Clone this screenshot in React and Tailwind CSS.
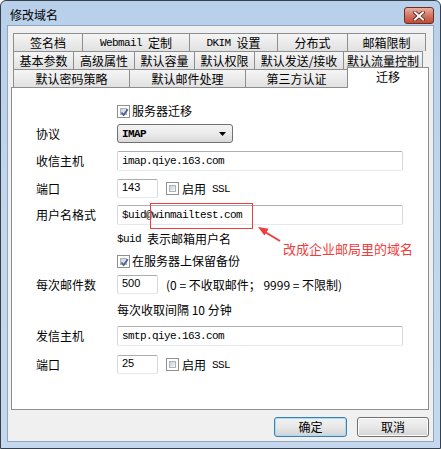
import React from "react";

const cjk = "font-['Noto_Sans_CJK_SC','Noto_Sans',sans-serif]";
const mono = "font-['Liberation_Mono',monospace]";

function Check({ checked }) {
  return (
    <span className="w-[13px] h-[13px] shrink-0 border border-[#8e8f8f] bg-white p-[2px] flex">
      <span className="relative w-full h-full border border-[#aeb3b9] bg-linear-to-br from-[#cbcfd5] to-[#f6f6f6]">
        {checked && (
          <svg className="absolute left-[-1px] top-[-1px]" width="9" height="9" viewBox="0 0 9 9">
            <path d="M1.5 4.5 L3.6 7 L7.8 1.2" fill="none" stroke="#4a5f97" strokeWidth="1.8" />
          </svg>
        )}
      </span>
    </span>
  );
}

function Tab({ cls, children }) {
  return (
    <div
      className={`h-[18px] border-t border-l border-[#8c8e90] bg-linear-to-b from-[#f5f5f5] to-[#e1e1e1] flex items-center justify-center text-[12px] leading-[14px] text-black ${cls}`}
    >
      {children}
    </div>
  );
}

function Input({ cls, children, top }) {
  return (
    <div
      className={`border border-t-[#abadb3] border-x-[#d5d8de] border-b-[#e3e9ef] rounded-[2px] bg-white pl-[4px] flex ${
        top ? "items-start pt-[1px]" : "items-center"
      } ${cls}`}
    >
      {children}
    </div>
  );
}

function Label({ children }) {
  return <div className="w-[81px] shrink-0 text-[12px] leading-[14px]">{children}</div>;
}

export default function App() {
  return (
    <div className={`relative w-[441px] h-[449px] bg-white ${cjk} text-black`}>
      <div className="w-[441px] h-[449px] border border-[#34404c] rounded-t-[6px] bg-linear-to-b from-[#b9d0ea] via-[#c3d6ec] to-[#c6d8ed] flex flex-col px-[6px] pb-[6px]">
        {/* title bar */}
        <div className="h-[24px] shrink-0 flex justify-between pt-[6px]">
          <div className="pl-[3px] pt-[1px] text-[12px] leading-[14px] text-black">修改域名</div>
          <div className="w-[30px] h-[17px] rounded-[3px] border border-[#6e2c22] bg-linear-to-b from-[#e9b0a3] via-[#d27562] to-[#c04a35] flex items-center justify-center">
            <svg width="12" height="10" viewBox="0 0 12 10">
              <path d="M2 1.5 L10 8.5 M10 1.5 L2 8.5" stroke="#5a1d14" strokeWidth="3.6" strokeLinecap="square" />
              <path d="M2 1.5 L10 8.5 M10 1.5 L2 8.5" stroke="#ffffff" strokeWidth="2" strokeLinecap="square" />
            </svg>
          </div>
        </div>
        {/* client */}
        <div className="flex-1 border border-[#90a6c1] bg-[#f0f0f0] flex flex-col pl-[3px] pr-[4px] pt-[7px]">
          <div className="flex flex-col">
            <div className="flex ml-[2px]">
              <Tab cls="w-[69px]">签名档</Tab>
              <Tab cls="w-[107px]">
                <span className={`${mono} text-[11px] tracking-[-0.6px]`}>Webmail</span>
                <span className="ml-[6px]">定制</span>
              </Tab>
              <Tab cls="w-[88px]">
                <span className={`${mono} text-[11px] tracking-[-0.6px]`}>DKIM</span>
                <span className="ml-[6px]">设置</span>
              </Tab>
              <Tab cls="w-[70px]">分布式</Tab>
              <Tab cls="w-[79px] border-r">邮箱限制</Tab>
            </div>
            <div className="flex ml-[2px]">
              <Tab cls="w-[60px]">基本参数</Tab>
              <Tab cls="w-[61px]">高级属性</Tab>
              <Tab cls="w-[60px]">默认容量</Tab>
              <Tab cls="w-[60px]">默认权限</Tab>
              <Tab cls="w-[89px]">默认发送/接收</Tab>
              <Tab cls="w-[80px] border-r">默认流量控制</Tab>
            </div>
            <div className="flex ml-[2px] h-[18px] items-end">
              <Tab cls="w-[116px]">默认密码策略</Tab>
              <Tab cls="w-[116px]">默认邮件处理</Tab>
              <Tab cls="w-[102px]">第三方认证</Tab>
              <div className="relative z-10 w-[82px] h-[21px] -mb-[1px] border-t border-x border-[#8c8e90] bg-white flex justify-center pt-[2px] text-[12px] leading-[14px]">
                迁移
              </div>
            </div>
            {/* panel */}
            <div className="h-[323px] w-[418px] border border-[#8c8e90] bg-white flex flex-col pl-[24px] pt-[15px] text-[12px] leading-[14px]">
              {/* A */}
              <div className="flex h-[16px] items-center">
                <div className="w-[81px]" />
                <Check checked />
                <span className="ml-[2px]">服务器迁移</span>
              </div>
              {/* B */}
              <div className="flex items-center mt-[5px]">
                <Label>协议</Label>
                <div className="w-[116px] h-[19px] rounded-[3px] border border-[#707070] bg-linear-to-b from-[#f3f3f3] via-[#ebebeb] to-[#d9d9d9] flex items-center justify-between pl-[4px] pr-[6px]">
                  <span className={`${mono} text-[11px] tracking-[-0.6px] font-bold`}>IMAP</span>
                  <svg width="7" height="4" viewBox="0 0 7 4">
                    <path d="M0 0 H7 L3.5 4 Z" fill="#000" />
                  </svg>
                </div>
              </div>
              {/* C */}
              <div className="flex items-center mt-[8px]">
                <Label>收信主机</Label>
                <Input cls="w-[286px] h-[20px]">
                  <span className={`${mono} text-[11px] tracking-[-0.6px]`}>imap.qiye.163.com</span>
                </Input>
              </div>
              {/* D */}
              <div className="flex items-center mt-[8px]">
                <Label>端口</Label>
                <Input cls="w-[41px] h-[19px]" top>
                  <span className="font-['Liberation_Sans',sans-serif] text-[11px] leading-[13px]">143</span>
                </Input>
                <span className="ml-[8px]"><Check /></span>
                <span className="ml-[3px]">启用</span>
                <span className={`${mono} text-[11px] tracking-[-0.6px] ml-[6px]`}>SSL</span>
              </div>
              {/* E */}
              <div className="flex items-center mt-[7px]">
                <Label>用户名格式</Label>
                <Input cls="w-[286px] h-[20px]">
                  <span className={`${mono} text-[11px] tracking-[-0.6px]`}>$uid@winmailtest.com</span>
                </Input>
              </div>
              {/* F */}
              <div className="flex items-center h-[16px] mt-[6px]">
                <div className="w-[81px]" />
                <span className={`${mono} text-[11px] tracking-[-0.6px]`}>$uid</span>
                <span className="ml-[6px]">表示邮箱用户名</span>
              </div>
              {/* G */}
              <div className="flex items-center h-[16px] mt-[6px]">
                <div className="w-[81px]" />
                <Check checked />
                <span className="ml-[2px]">在服务器上保留备份</span>
              </div>
              {/* H */}
              <div className="flex items-center mt-[6px]">
                <Label>每次邮件数</Label>
                <Input cls="w-[41px] h-[19px]" top>
                  <span className="font-['Liberation_Sans',sans-serif] text-[11px] leading-[13px]">500</span>
                </Input>
                <span className="ml-[8px]">(0 = 不收取邮件； 9999 = 不限制)</span>
              </div>
              {/* I */}
              <div className="flex items-center h-[16px] mt-[8px]">
                <div className="w-[81px]" />
                <span>每次收取间隔 10 分钟</span>
              </div>
              {/* J */}
              <div className="flex items-center mt-[8px]">
                <Label>发信主机</Label>
                <Input cls="w-[286px] h-[20px]">
                  <span className={`${mono} text-[11px] tracking-[-0.6px]`}>smtp.qiye.163.com</span>
                </Input>
              </div>
              {/* K */}
              <div className="flex items-center mt-[9px]">
                <Label>端口</Label>
                <Input cls="w-[41px] h-[19px]" top>
                  <span className="font-['Liberation_Sans',sans-serif] text-[11px] leading-[13px]">25</span>
                </Input>
                <span className="ml-[8px]"><Check /></span>
                <span className="ml-[3px]">启用</span>
                <span className={`${mono} text-[11px] tracking-[-0.6px] ml-[6px]`}>SSL</span>
              </div>
            </div>
            {/* buttons */}
            <div className="flex justify-end gap-[10px] mt-[7px]">
              <div className="w-[73px] h-[20px] rounded-[3px] border border-[#3c7fb1] bg-linear-to-b from-[#f2f2f2] via-[#e8e8e8] to-[#d3d3d3] flex items-center justify-center text-[12px] leading-[14px] shadow-[inset_0_0_0_1px_#a9dcf6]">
                确定
              </div>
              <div className="w-[72px] h-[20px] rounded-[3px] border border-[#707070] bg-linear-to-b from-[#f2f2f2] via-[#e8e8e8] to-[#d3d3d3] flex items-center justify-center text-[12px] leading-[14px] shadow-[inset_0_0_0_1px_#fcfcfc]">
                取消
              </div>
            </div>
          </div>
        </div>
      </div>

      {/* annotation overlay */}
      <div className="absolute left-[150px] top-[203px] w-[103px] h-[26px] border border-[#f23b3b] pointer-events-none" />
      <svg className="absolute left-0 top-0 pointer-events-none" width="441" height="449">
        <line x1="280" y1="241" x2="265" y2="232" stroke="#f23b3b" strokeWidth="2" />
        <polygon points="258,227 268.6,228.7 264.5,235.6" fill="#f23b3b" />
      </svg>
      <div className="absolute left-[283px] top-[241px] text-[13px] leading-[15px] text-[#f23b3b] whitespace-nowrap pointer-events-none">
        改成企业邮局里的域名
      </div>
    </div>
  );
}
